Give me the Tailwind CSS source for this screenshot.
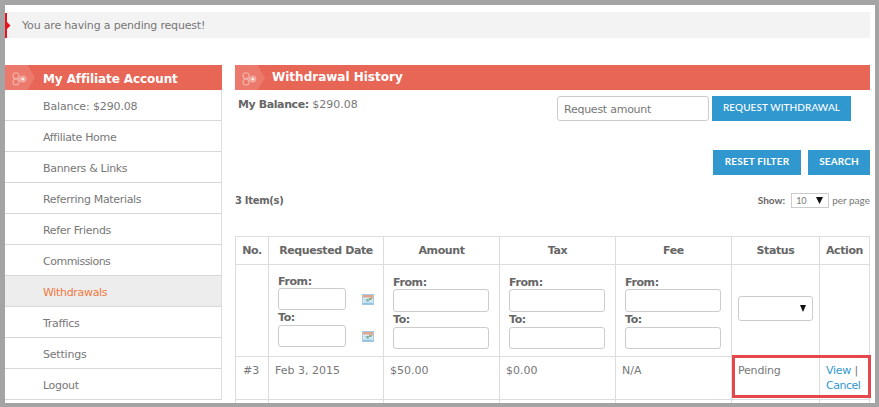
<!DOCTYPE html>
<html lang="en">
<head>
<meta charset="utf-8">
<title>My Affiliate Account</title>
<script src="https://cdn.jsdelivr.net/npm/@tailwindcss/browser@4"></script>
</head>
<body class="w-[879px] h-[407px] overflow-hidden bg-white text-[#777] font-['DejaVu_Sans',sans-serif] text-[11px] leading-[15px]">
<svg class="hidden">
  <symbol id="badge" viewBox="0 0 30 25">
    <path d="M0 0H22.5L30 12.5L22.5 25H0Z" fill="#eb7a6c"/>
    <g fill="none" stroke="#f5b3aa" stroke-width="1.1"><circle cx="11" cy="10.8" r="3"/><circle cx="11" cy="17" r="3"/><circle cx="17.8" cy="14" r="3"/></g>
    <circle cx="17.8" cy="14" r="1.8" fill="#fdeae7"/><path d="M12.5 12.4L17 14L12.5 15.5" stroke="#f5b3aa" stroke-width=".7" fill="none"/>
  </symbol>
  <symbol id="cal" viewBox="0 0 12 11">
    <rect x=".5" y=".5" width="11" height="10" fill="#d9ebf5" stroke="#a9cbe2"/>
    <rect x="1" y="1" width="10" height="2.5" fill="#e0a68d"/>
    <path d="M2 5.5H10M2 8H10" stroke="#b4d8ea"/>
    <rect x="4.5" y="5" width="2.3" height="2.5" fill="#7fae98"/><rect x="7" y="4" width="2.3" height="2" fill="#7fae98"/><rect x="9" y="3" width="1.5" height="2" fill="#e6a45f"/>
    <rect x="1" y="9" width="10" height="1.3" fill="#8dc3e3"/>
  </symbol>
</svg>
<div class="w-[879px] h-[407px] overflow-hidden border-t-[5px] border-l-[5px] border-r-4 border-b-4 border-[#a4a4a4]">
  <div class="mt-[7px] w-[865px] h-[26px] bg-[#f3f3f3] flex items-center">
    <svg class="w-[6px] h-[25px] shrink-0" viewBox="0 0 6 25"><path d="M0 0H2V9L5.5 12.5L2 16V25H0Z" fill="#e8131b"/></svg>
    <span class="ml-[11px] whitespace-nowrap tracking-[-0.18px]">You are having a pending request!</span>
  </div>
  <div class="mt-[27px] flex gap-[13px] h-[340px]">
    <aside class="w-[217px] shrink-0">
      <h2 class="h-[25px] bg-[#e86656] flex items-center text-white font-bold text-[12px]">
        <svg class="w-[30px] h-[25px]"><use href="#badge"/></svg><span class="ml-2 mt-[3px] whitespace-nowrap tracking-[-0.1px]">My Affiliate Account</span>
      </h2>
      <nav class="border-r border-[#ddd] h-[310px] tracking-[-0.32px] [&>a]:flex [&>a]:items-center [&>a]:h-[31px] [&>a]:pl-[38px] [&>a]:border-b [&>a]:border-[#d8d8d8] [&>a]:pt-[2px]">
        <a class="tracking-[-0.13px]">Balance: $290.08</a>
        <a>Affiliate Home</a>
        <a>Banners &amp; Links</a>
        <a>Referring Materials</a>
        <a>Refer Friends</a>
        <a class="tracking-[-0.5px]">Commissions</a>
        <a class="bg-[#ededed] text-[#f0793f]">Withdrawals</a>
        <a>Traffics</a>
        <a class="tracking-[-0.2px]">Settings</a>
        <a>Logout</a>
      </nav>
    </aside>
    <main class="w-[635px] shrink-0">
      <h1 class="h-[25px] bg-[#e86656] flex items-center text-white font-bold text-[12px]">
        <svg class="w-[30px] h-[25px]"><use href="#badge"/></svg><span class="ml-[7px] whitespace-nowrap">Withdrawal History</span>
      </h1>
      <div class="mt-[6px] h-[25px] flex pl-[3px] pr-[19px]">
        <p class="mt-[1px]"><b class="text-[#666] tracking-[-0.4px]">My Balance:</b> $290.08</p>
        <div class="ml-auto w-[152px] h-[25px] border border-[#ccc] rounded-[3px] px-[6px] pt-[5px] tracking-[-0.25px]">Request amount</div>
        <button class="ml-[3px] w-[139px] h-[25px] bg-[#3197cf] text-white font-['Lato',sans-serif] font-medium text-[10px] tracking-[0.08px] pb-[2px] whitespace-nowrap">REQUEST WITHDRAWAL</button>
      </div>
      <div class="mt-[29px] flex justify-end gap-[7px] font-['Lato',sans-serif] text-[10px] tracking-[0.15px] text-white font-bold">
        <button class="w-[88px] h-[25px] bg-[#3197cf] pb-[2px]">RESET FILTER</button>
        <button class="w-[62px] h-[25px] bg-[#3197cf] pb-[2px]">SEARCH</button>
      </div>
      <div class="mt-[18px] h-[15px] flex items-center">
        <b class="text-[10px] text-[#666] tracking-[-0.3px]">3 Item(s)</b>
        <div class="ml-auto flex items-center font-['Lato',sans-serif] text-[10px]">
          <b class="text-[#666]">Show:</b>
          <span class="ml-[6px] mr-[3px] w-[38px] h-[15px] border border-[#ccc] flex items-center justify-between pl-[4px] pr-[5px] text-[9px]">10<svg class="w-[7px] h-[7px]" viewBox="0 0 7 7"><path d="M0 0H7L3.5 7Z" fill="#111"/></svg></span>
          <span>per page</span>
        </div>
      </div>
      <div class="mt-[28px] relative">
        <div class="grid grid-cols-[33px_115px_116px_116px_116px_88px_50px] grid-rows-[28px_92px_43px_10px] border-t border-l border-[#ddd] w-[635px] [&>div]:border-r [&>div]:border-b [&>div]:border-[#ddd] [&_b]:text-[#666] [&_b]:block [&_b]:tracking-[-0.4px] [&_i]:block [&_i]:border [&_i]:border-[#ccc] [&_i]:rounded-[3px]">
          <div class="text-center pt-[6px]"><b>No.</b></div>
          <div class="text-center pt-[6px]"><b>Requested Date</b></div>
          <div class="text-center pt-[6px]"><b>Amount</b></div>
          <div class="text-center pt-[6px]"><b>Tax</b></div>
          <div class="text-center pt-[6px]"><b>Fee</b></div>
          <div class="text-center pt-[6px]"><b>Status</b></div>
          <div class="text-center pt-[6px]"><b>Action</b></div>

          <div></div>
          <div class="pl-[9px] pt-[9px]">
            <b class="h-[14px]">From:</b>
            <div class="flex items-center"><i class="w-[68px] h-[22px]"></i><svg class="ml-[16px] w-3 h-[11px]"><use href="#cal"/></svg></div>
            <b class="h-[15px]">To:</b>
            <div class="flex items-center"><i class="w-[68px] h-[22px]"></i><svg class="ml-[16px] w-3 h-[11px]"><use href="#cal"/></svg></div>
          </div>
          <div class="pl-[9px] pt-[10px]"><b class="h-[14px]">From:</b><i class="w-[96px] h-[23px]"></i><b class="h-[15px]">To:</b><i class="w-[96px] h-[22px]"></i></div>
          <div class="pl-[9px] pt-[10px]"><b class="h-[14px]">From:</b><i class="w-[96px] h-[23px]"></i><b class="h-[15px]">To:</b><i class="w-[96px] h-[22px]"></i></div>
          <div class="pl-[9px] pt-[10px]"><b class="h-[14px]">From:</b><i class="w-[96px] h-[23px]"></i><b class="h-[15px]">To:</b><i class="w-[96px] h-[22px]"></i></div>
          <div class="pl-[6px] pt-[31px]"><span class="w-[75px] h-[25px] border border-[#ccc] rounded-[3px] flex items-center justify-end pr-[6px]"><svg class="w-[6px] h-[7px]" viewBox="0 0 6 7"><path d="M0 0H6L3 7Z" fill="#111"/></svg></span></div>
          <div></div>

          <div class="pl-[7px] pt-[6px]">#3</div>
          <div class="pl-[6px] pt-[6px]">Feb 3, 2015</div>
          <div class="pl-[6px] pt-[6px]">$50.00</div>
          <div class="pl-[6px] pt-[6px]">$0.00</div>
          <div class="pl-[6px] pt-[6px]">N/A</div>
          <div class="pl-[6px] pt-[6px] tracking-[-0.2px]">Pending</div>
          <div class="pl-[6px] pt-[6px] whitespace-nowrap"><span class="text-[#3197cf] tracking-[-0.3px]">View</span> |<br><span class="text-[#3197cf] tracking-[-0.5px]">Cancel</span></div>
          <div></div><div></div><div></div><div></div><div></div><div></div><div></div>
        </div>
        <div class="absolute left-[497px] top-[119px] w-[139px] h-[43px] border-[3px] border-[#e5484a]"></div>
      </div>
    </main>
  </div>
</div>
</body>
</html>
